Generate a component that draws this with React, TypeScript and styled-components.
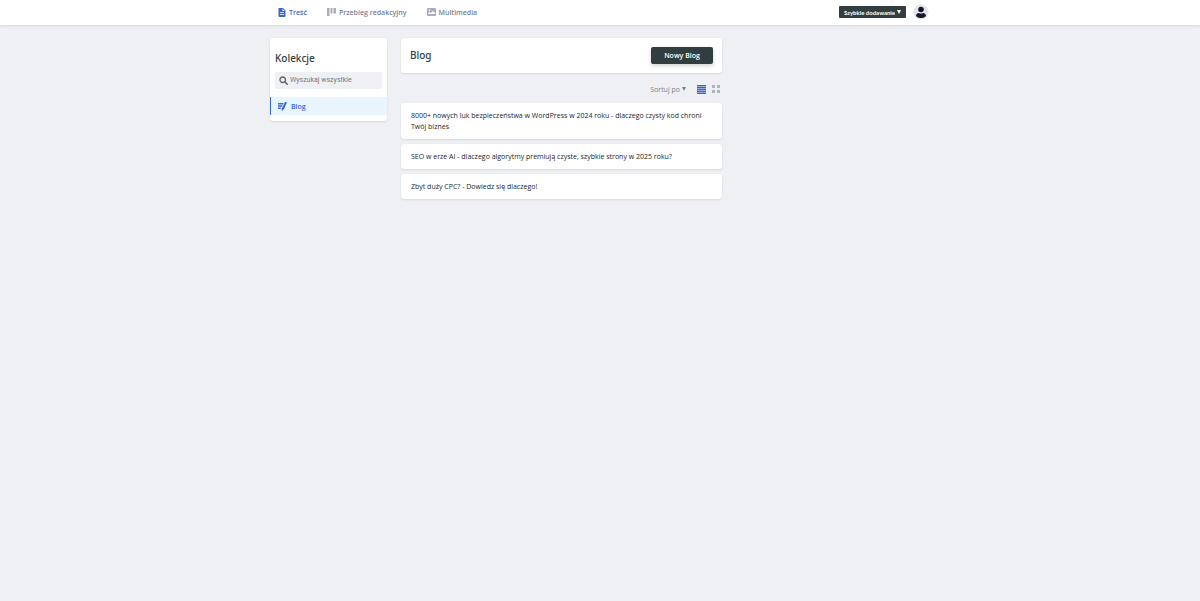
import React from "react";
import styled, { createGlobalStyle } from "styled-components";

const ink = "#313d3e";
const blue = "#3a69c7";
const muted = "#798291";

const GlobalStyle = createGlobalStyle`
  *, *::before, *::after { box-sizing: border-box; }
  body {
    margin: 0;
    background: #eff0f4;
    color: ${ink};
    font-family: "Open Sans", "Noto Sans", sans-serif;
    font-size: 7px;
    line-height: 11px;
  }
  button, input { font: inherit; }
  h1, h2, h3, ul { margin: 0; padding: 0; }
  ul { list-style: none; }
`;

const shadow = "0 1px 2px rgba(68, 74, 87, 0.12), 0 0 2px rgba(68, 74, 87, 0.06)";

const Header = styled.header`
  background: #fff;
  box-shadow: ${shadow};
`;

const HeaderInner = styled.div`
  display: flex;
  align-items: center;
  justify-content: space-between;
  max-width: 660px;
  height: 25px;
  margin: 0 auto;
  padding: 0 1px 1px 8px;
`;

const Nav = styled.nav`
  display: flex;
  gap: 20px;
`;

const NavLink = styled.a<{ $active?: boolean }>`
  display: flex;
  align-items: center;
  gap: 3px;
  color: ${(p) => (p.$active ? blue : muted)};
  font-weight: 600;
  text-decoration: none;
  svg { color: ${(p) => (p.$active ? blue : "#a9adb9")}; }
`;

const HeaderActions = styled.div`
  display: flex;
  align-items: center;
  gap: 7px;
`;

const QuickAdd = styled.button`
  display: flex;
  align-items: center;
  justify-content: center;
  gap: 2px;
  width: 67px;
  height: 12px;
  padding: 0;
  border: 0;
  border-radius: 1px;
  background: ${ink};
  color: #fff;
  font-family: Lato, sans-serif;
  font-size: 6px;
  font-weight: 700;
  white-space: nowrap;
`;

const Avatar = styled.button`
  display: flex;
  width: 16px;
  height: 16px;
  padding: 0;
  border: 0;
  border-radius: 50%;
  background: none;
`;

const Page = styled.main`
  display: grid;
  grid-template-columns: 117px minmax(0, 321px);
  align-items: start;
  gap: 14px;
  max-width: 660px;
  margin: 0 auto;
  padding: 13px 0;
`;

const Sidebar = styled.aside`
  padding: 13px 0 6px;
  border-radius: 3px;
  background: #fff;
  box-shadow: ${shadow};
`;

const SidebarTitle = styled.h2`
  padding: 0 5px;
  font-family: "Noto Sans", sans-serif;
  font-size: 10px;
  font-weight: 500;
  line-height: 15px;
`;

const SearchBox = styled.label`
  display: flex;
  align-items: center;
  gap: 2px;
  height: 17px;
  margin: 6px 5px 8px;
  padding: 0 4px;
  border-radius: 2px;
  background: #eff0f4;
  color: #5d626f;
`;

const SearchInput = styled.input`
  flex: 1;
  min-width: 0;
  padding: 0;
  border: 0;
  outline: 0;
  background: none;
  color: ${ink};
  font-family: Roboto, sans-serif;
  &::placeholder { color: #757a84; opacity: 1; }
`;

const CollectionLink = styled.a`
  display: flex;
  align-items: center;
  gap: 4px;
  height: 18px;
  padding: 0 6px 0 7px;
  border-left: 1px solid ${blue};
  background: #e8f5fe;
  color: ${blue};
  font-weight: 600;
  text-decoration: none;
`;

const CollectionTop = styled.section`
  display: flex;
  align-items: center;
  justify-content: space-between;
  height: 35px;
  padding: 0 9px;
  border-radius: 3px;
  background: #fff;
  box-shadow: ${shadow};
`;

const CollectionTitle = styled.h1`
  font-family: "Noto Sans", sans-serif;
  font-size: 10px;
  font-weight: 500;
  line-height: 15px;
`;

const NewLink = styled.a`
  display: flex;
  align-items: center;
  justify-content: center;
  width: 62px;
  height: 17px;
  border-radius: 2px;
  background: ${ink};
  box-shadow: 0 2px 4px rgba(14, 30, 37, 0.2);
  color: #fff;
  font-weight: 600;
  text-decoration: none;
`;

const Controls = styled.div`
  display: flex;
  align-items: center;
  justify-content: flex-end;
  height: 12px;
  margin: 10px 0 8px;
  padding-right: 1px;
`;

const SortButton = styled.button`
  display: flex;
  align-items: center;
  gap: 2px;
  margin-right: 11px;
  padding: 0;
  border: 0;
  background: none;
  color: ${muted};
  font-weight: 500;
`;

const ViewButtons = styled.div`
  display: flex;
  gap: 6px;
`;

const ViewButton = styled.button<{ $active?: boolean }>`
  display: flex;
  padding: 0;
  border: 0;
  background: none;
  color: ${(p) => (p.$active ? blue : "#b0b4bf")};
`;

const EntryList = styled.ul`
  display: grid;
  gap: 5px;
`;

const EntryCard = styled.li`
  border-radius: 3px;
  background: #fff;
  box-shadow: ${shadow};
`;

const EntryLink = styled.a`
  display: block;
  padding: 7px 10px;
  color: #1d2829;
  text-decoration: none;
`;

const EntryTitle = styled.h3`
  font-size: 7px;
  font-weight: 500;
  line-height: 11px;
`;

const Caret = () => (
  <svg width="4" height="4" viewBox="0 0 4 4" fill="currentColor" aria-hidden="true">
    <path d="M0 0h4L2 4z" />
  </svg>
);

const PageIcon = () => (
  <svg width="8" height="9" viewBox="0 0 16 18" fill="currentColor" aria-hidden="true">
    <path fillRule="evenodd" d="M2 0h8l5 5v11a2 2 0 0 1-2 2H3a2 2 0 0 1-2-2V1a1 1 0 0 1 1-1zm7 1.600V6h4.400zM4 8v1.600h8V8zm0 4v1.600h8V12z" />
  </svg>
);

const WorkflowIcon = () => (
  <svg width="9" height="8" viewBox="0 0 18 16" fill="currentColor" aria-hidden="true">
    <path d="M0 0h5v16H0zM7 0h4v11H7zM13 0h5v11h-5z" />
  </svg>
);

const MediaIcon = () => (
  <svg width="9" height="8" viewBox="0 0 18 16" fill="currentColor" aria-hidden="true">
    <path fillRule="evenodd" d="M2 0h14a2 2 0 0 1 2 2v12a2 2 0 0 1-2 2H2a2 2 0 0 1-2-2V2a2 2 0 0 1 2-2zm0 12h14v-2l-4-4-4 4-3-2-3 3zM5 3a1.500 1.500 0 1 0 .1 0z" />
  </svg>
);

const SearchIcon = () => (
  <svg width="9" height="9" viewBox="0 0 18 18" fill="none" stroke="currentColor" aria-hidden="true">
    <circle cx="7.500" cy="7.500" r="5.500" strokeWidth="2.600" />
    <path d="M12 12l4.500 4.500" strokeWidth="3" strokeLinecap="round" />
  </svg>
);

const WriteIcon = () => (
  <svg width="9" height="9" viewBox="0 0 18 18" fill="currentColor" aria-hidden="true">
    <path d="M0 2h11l-1 3H0zM0 6.500h9l-1 3H0zM0 11h6l-1 3H0zM14 0h4l-6 14-4 4-1-4z" />
  </svg>
);

const ListIcon = () => (
  <svg width="9" height="9" viewBox="0 0 9 9" fill="currentColor" aria-hidden="true">
    <path opacity=".5" d="M0 0h9v9H0z" />
    <path d="M0 0h9v1H0zM0 2h9v1H0zM0 4h9v1H0zM0 6h9v1H0zM0 8h9v1H0z" />
  </svg>
);

const GridIcon = () => (
  <svg width="9" height="9" viewBox="0 0 9 9" fill="currentColor" aria-hidden="true">
    <rect width="3" height="3" x="0" y="0" />
    <rect width="3" height="3" x="5" y="0" />
    <rect width="3" height="3" x="0" y="5" />
    <rect width="3" height="3" x="5" y="5" />
  </svg>
);

const AvatarIcon = () => (
  <svg width="16" height="16" viewBox="0 0 32 32" aria-hidden="true">
    <circle cx="16" cy="16" r="15" fill="#e4e5eb" />
    <circle cx="16" cy="11" r="5.600" fill="#17192b" />
    <path d="M6 24c0-4 3-6 6-6 2 1.400 6 1.400 8 0 3 0 6 2 6 6-5 5.400-15 5.400-20 0z" fill="#17192b" />
  </svg>
);

const entries = [
  "8000+ nowych luk bezpieczeństwa w WordPress w 2024 roku - dlaczego czysty kod chroni Twój biznes",
  "SEO w erze AI - dlaczego algorytmy premiują czyste, szybkie strony w 2025 roku?",
  "Zbyt duży CPC? - Dowiedz się dlaczego!",
];

export default function App() {
  return (
    <>
      <GlobalStyle />
      <Header>
        <HeaderInner>
          <Nav>
            <NavLink href="#content" $active><PageIcon />Treść</NavLink>
            <NavLink href="#workflow"><WorkflowIcon />Przebieg redakcyjny</NavLink>
            <NavLink href="#media"><MediaIcon />Multimedia</NavLink>
          </Nav>
          <HeaderActions>
            <QuickAdd type="button">Szybkie dodawanie<Caret /></QuickAdd>
            <Avatar type="button" aria-label="Konto"><AvatarIcon /></Avatar>
          </HeaderActions>
        </HeaderInner>
      </Header>
      <Page>
        <Sidebar>
          <SidebarTitle>Kolekcje</SidebarTitle>
          <SearchBox>
            <SearchIcon />
            <SearchInput type="text" placeholder="Wyszukaj wszystkie" aria-label="Wyszukaj wszystkie" />
          </SearchBox>
          <CollectionLink href="#blog"><WriteIcon />Blog</CollectionLink>
        </Sidebar>
        <div>
          <CollectionTop>
            <CollectionTitle>Blog</CollectionTitle>
            <NewLink href="#new">Nowy Blog</NewLink>
          </CollectionTop>
          <Controls>
            <SortButton type="button">Sortuj po<Caret /></SortButton>
            <ViewButtons>
              <ViewButton type="button" aria-label="Lista" $active><ListIcon /></ViewButton>
              <ViewButton type="button" aria-label="Siatka"><GridIcon /></ViewButton>
            </ViewButtons>
          </Controls>
          <EntryList>
            {entries.map((title) => (
              <EntryCard key={title}>
                <EntryLink href="#entry"><EntryTitle>{title}</EntryTitle></EntryLink>
              </EntryCard>
            ))}
          </EntryList>
        </div>
      </Page>
    </>
  );
}
